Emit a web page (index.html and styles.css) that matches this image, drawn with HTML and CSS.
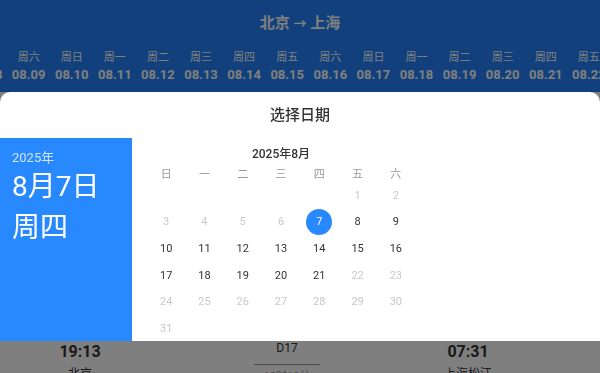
FILE: index.html
```html
<!DOCTYPE html>
<html lang="zh-CN">
  <head>
    <meta charset="UTF-8" />
    <meta name="viewport" content="width=device-width, initial-scale=1.0" />
    <title>选择日期</title>
    <link rel="stylesheet" href="styles.css">
  </head>

  <body>
    <div class="header">
      <div class="header-title">北京 <span class="arrow">&#x2192;</span> 上海</div>
      <div class="date-strip">
        <div class="date-item"><div class="date-week">周五</div><div class="date-day">08.08</div></div>
        <div class="date-item"><div class="date-week">周六</div><div class="date-day">08.09</div></div>
        <div class="date-item"><div class="date-week">周日</div><div class="date-day">08.10</div></div>
        <div class="date-item"><div class="date-week">周一</div><div class="date-day">08.11</div></div>
        <div class="date-item"><div class="date-week">周二</div><div class="date-day">08.12</div></div>
        <div class="date-item"><div class="date-week">周三</div><div class="date-day">08.13</div></div>
        <div class="date-item"><div class="date-week">周四</div><div class="date-day">08.14</div></div>
        <div class="date-item"><div class="date-week">周五</div><div class="date-day">08.15</div></div>
        <div class="date-item"><div class="date-week">周六</div><div class="date-day">08.16</div></div>
        <div class="date-item"><div class="date-week">周日</div><div class="date-day">08.17</div></div>
        <div class="date-item"><div class="date-week">周一</div><div class="date-day">08.18</div></div>
        <div class="date-item"><div class="date-week">周二</div><div class="date-day">08.19</div></div>
        <div class="date-item"><div class="date-week">周三</div><div class="date-day">08.20</div></div>
        <div class="date-item"><div class="date-week">周四</div><div class="date-day">08.21</div></div>
        <div class="date-item"><div class="date-week">周五</div><div class="date-day">08.22</div></div>
      </div>
    </div>

    <div class="train-list">
      <div class="train-card">
        <div class="train-col"><div class="train-time">06:10</div><div class="train-station">北京南</div></div>
        <div class="train-mid"><div class="train-no">G1</div><div class="train-line"></div><div class="train-dur">4时28分</div></div>
        <div class="train-col"><div class="train-time">10:38</div><div class="train-station">上海虹桥</div></div>
      </div>
      <div class="train-card">
        <div class="train-col"><div class="train-time">07:00</div><div class="train-station">北京南</div></div>
        <div class="train-mid"><div class="train-no">G3</div><div class="train-line"></div><div class="train-dur">4时35分</div></div>
        <div class="train-col"><div class="train-time">11:35</div><div class="train-station">上海</div></div>
      </div>
      <div class="train-card">
        <div class="train-col"><div class="train-time">12:00</div><div class="train-station">北京南</div></div>
        <div class="train-mid"><div class="train-no">G7</div><div class="train-line"></div><div class="train-dur">4时40分</div></div>
        <div class="train-col"><div class="train-time">16:40</div><div class="train-station">上海</div></div>
      </div>
      <div class="train-card">
        <div class="train-col"><div class="train-time">19:13</div><div class="train-station">北京</div></div>
        <div class="train-mid"><div class="train-no">D17</div><div class="train-line"></div><div class="train-dur">12时18分</div></div>
        <div class="train-col"><div class="train-time">07:31</div><div class="train-station">上海松江</div></div>
      </div>
    </div>

    <div class="mask">
      <div class="picker">
        <div class="picker-title">选择日期</div>
        <div class="picker-body">
          <div class="picker-side">
            <div class="side-year">2025年</div>
            <div class="side-date">8月7日</div>
            <div class="side-week">周四</div>
          </div>
          <div class="calendar">
            <div class="cal-month">2025年8月</div>
            <div class="cal-grid">
              <div class="cal-week">日</div>
              <div class="cal-week">一</div>
              <div class="cal-week">二</div>
              <div class="cal-week">三</div>
              <div class="cal-week">四</div>
              <div class="cal-week">五</div>
              <div class="cal-week">六</div>
            </div>
            <div class="cal-grid" id="cal-days"></div>
          </div>
        </div>
      </div>
    </div>

    <script>
      // august 2025 starts on friday, today is the 7th, open until the 21st
      const days = document.getElementById("cal-days");
      for (let i = 0; i < 5; i++) {
        days.innerHTML += `<div class="cal-day"></div>`;
      }
      for (let d = 1; d <= 31; d++) {
        let cls = "cal-day";
        if (d < 7 || d > 21) cls += " off";
        if (d == 7) cls += " on";
        days.innerHTML += `<div class="${cls}"><span>${d}</span></div>`;
      }
    </script>
  </body>
</html>
```

FILE: styles.css
```css
body {
  margin: 0;
  background-color: #ffffff;
  font-family: Roboto, "Noto Sans CJK SC", sans-serif;
  color: #333333;
  overflow: hidden;
}

.header {
  background-color: #2281f9;
  color: #ffffff;
  height: 92px;
  overflow: hidden;
}

.header-title {
  text-align: center;
  font-size: 15px;
  font-weight: bold;
  line-height: 44px;
  padding-top: 1px;
}

.arrow {
  font-size: 13px;
}

.date-strip {
  display: flex;
  margin-left: -36px;
  margin-top: 4px;
}

.date-item {
  flex: 0 0 43.1px;
  text-align: center;
}

.date-week {
  font-size: 11px;
  line-height: 16px;
}

.date-day {
  font-size: 13px;
  font-weight: bold;
  line-height: 18px;
}

.train-list {
  padding-top: 8px;
}

.train-card {
  display: grid;
  grid-template-columns: 160px 254px 108px;
  height: 69px;
  margin-bottom: 8px;
  padding-top: 10px;
  box-sizing: border-box;
}

.train-col {
  text-align: center;
}

.train-time {
  font-size: 16px;
  font-weight: bold;
  line-height: 22px;
}

.train-station {
  font-size: 12px;
  line-height: 22px;
}

.train-mid {
  display: flex;
  flex-direction: column;
  align-items: center;
}

.train-no {
  font-size: 12px;
  line-height: 14px;
}

.train-line {
  width: 66px;
  height: 1px;
  background-color: #999999;
  margin-top: 9px;
}

.train-dur {
  font-size: 11px;
  color: #999999;
  line-height: 16px;
  margin-top: 4px;
}

/* dimmed layer with the date picker on top */
.mask {
  position: fixed;
  top: 0;
  left: 0;
  right: 0;
  bottom: 0;
  background-color: rgb(0 0 0 / 50%);
}

.picker {
  position: absolute;
  top: 92px;
  left: 0;
  right: 0;
  height: 249px;
  background-color: #ffffff;
  border-radius: 10px 10px 0 0;
  overflow: hidden;
}

.picker-title {
  text-align: center;
  font-size: 15px;
  font-weight: 500;
  line-height: 46px;
  color: #333333;
}

.picker-body {
  display: flex;
  height: 203px;
}

.picker-side {
  width: 132px;
  background-color: #2888fe;
  color: #ffffff;
  padding: 11px 0 0 12px;
  box-sizing: border-box;
}

.side-year {
  font-size: 13px;
  line-height: 18px;
  color: rgb(255 255 255 / 78%);
}

.side-date {
  font-size: 28px;
  line-height: 40px;
}

.side-week {
  font-size: 28px;
  line-height: 42px;
}

.calendar {
  width: 268px;
  padding-left: 15px;
}

.cal-month {
  text-align: center;
  font-size: 12px;
  font-weight: 500;
  line-height: 16px;
  padding: 8px 0 6px;
  color: #333333;
}

.cal-grid {
  display: grid;
  grid-template-columns: repeat(7, 1fr);
}

.cal-week {
  text-align: center;
  font-size: 11px;
  line-height: 14px;
  color: #999999;
}

.cal-day {
  height: 26.6px;
  display: flex;
  align-items: center;
  justify-content: center;
  font-size: 11px;
  color: #333333;
}

.cal-day.off {
  color: #c8c8c8;
}

.cal-day.on span {
  width: 26px;
  height: 26px;
  border-radius: 50%;
  background-color: #2888fe;
  color: #ffffff;
  display: flex;
  align-items: center;
  justify-content: center;
}
```
